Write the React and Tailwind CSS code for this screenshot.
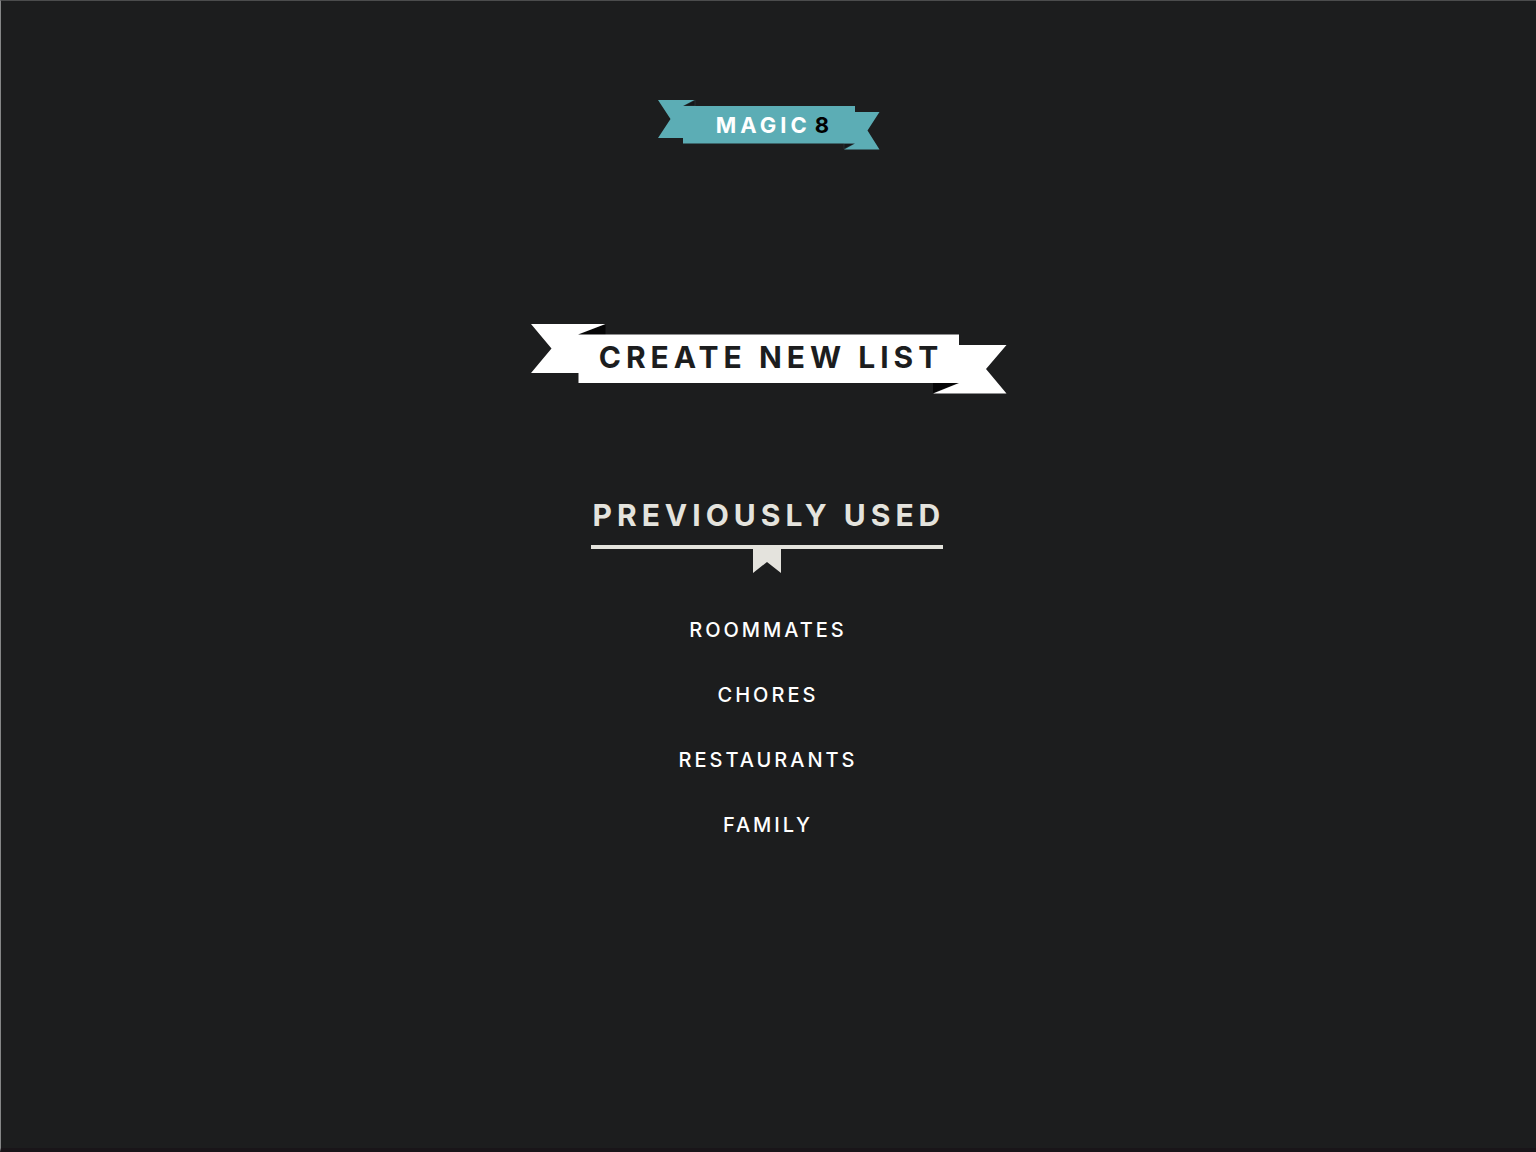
const lists = ["Roommates", "Chores", "Restaurants", "Family"];

function LogoRibbon() {
  return (
    <svg aria-hidden="true" viewBox="0 0 222 50" className="absolute inset-0 h-full w-full">
      <path d="M25 6L37 0V6Z" fill="#15181a" stroke="#34454a" strokeWidth="0.5" />
      <path d="M197 43.500H186V49Z" fill="#15181a" stroke="#34454a" strokeWidth="0.5" />
      <path
        d="M0 0H36.500L25 6H197V12H221.500L209.500 30.500L221.500 49.500H186L197 43.500H25V38H0L12.500 19Z"
        fill="#5cadb5"
      />
    </svg>
  );
}

function ButtonRibbon() {
  return (
    <svg aria-hidden="true" viewBox="0 0 476 70" className="absolute inset-0 h-full w-full">
      <path d="M47 11L74.500 0V11Z" fill="#050506" />
      <path d="M428 58.500H402V69Z" fill="#050506" />
      <path
        d="M0 0H74.500L47 10.500H428V21H475.500L455 45L475.500 69.500H402L428 59H47.500V49H0L20.500 24.500Z"
        fill="#ffffff"
      />
    </svg>
  );
}

export default function App() {
  return (
    <main className="flex min-h-screen flex-col items-center border-t border-b-4 border-l border-t-[#4b4c4d] border-b-[#191519] border-l-[#858687] bg-[#1c1d1e] pt-[99px] font-['Inter',sans-serif] uppercase">
      <h1 className="relative flex h-[50px] w-[222px] items-center justify-center pl-2 text-[22px] leading-none font-bold text-white">
        <LogoRibbon />
        <span className="relative tracking-[4px]">Magic</span>
        <span className="relative ml-1 text-black">8</span>
      </h1>

      <button
        type="button"
        className="relative mt-[174px] flex h-[70px] w-[476px] cursor-pointer items-center justify-center pb-1 pl-[5px] text-[30px] leading-none font-bold tracking-[5px] whitespace-nowrap text-[#1c1d1e] uppercase"
      >
        <ButtonRibbon />
        <span className="relative">Create new list</span>
      </button>

      <section className="mt-[100px] mr-1 flex flex-col items-center">
        <h2 className="w-[352px] border-b-4 border-[#e4e3dd] pt-px pb-[10px] pl-0.5 text-[30px] leading-10 font-bold tracking-[5px] whitespace-nowrap text-[#e4e3dd]">
          Previously used
        </h2>
        <svg aria-hidden="true" viewBox="0 0 28 24" className="h-6 w-7">
          <path d="M0 0H28V24L14 13L0 24Z" fill="#e4e3dd" />
        </svg>
        <ul className="mt-[42px] flex flex-col items-center gap-[35px]">
          {lists.map((name) => (
            <li key={name} className="flex">
              <a href="#" className="pl-[3px] text-[20px] leading-[30px] font-medium tracking-[3px] text-white">
                {name}
              </a>
            </li>
          ))}
        </ul>
      </section>
    </main>
  );
}
